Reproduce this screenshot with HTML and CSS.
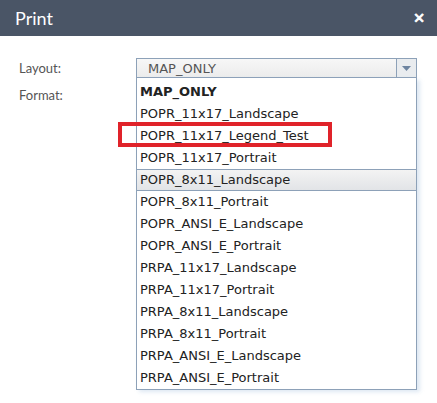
FILE: index.html
```html
<!DOCTYPE html>
<html>
<head>
<meta charset="utf-8">
<link rel="stylesheet" href="styles.css">
</head>
<body>
<div class="dialog">
  <div class="titlebar">
    <span class="title">Print</span>
    <span class="close">&#x2715;</span>
  </div>
  <div class="content">
    <div class="row">
      <span class="label">Layout:</span>
      <div class="select-wrap">
        <div class="select">
          <span class="value">MAP_ONLY</span>
          <span class="arrow"><svg width="9" height="5" viewBox="0 0 9 5"><path d="M0 0h9L4.5 5z" fill="#6d84a0"/></svg></span>
        </div>
        <ul class="menu">
          <li class="bold">MAP_ONLY</li>
          <li>POPR_11x17_Landscape</li>
          <li>POPR_11x17_Legend_Test</li>
          <li>POPR_11x17_Portrait</li>
          <li class="hover">POPR_8x11_Landscape</li>
          <li>POPR_8x11_Portrait</li>
          <li>POPR_ANSI_E_Landscape</li>
          <li>POPR_ANSI_E_Portrait</li>
          <li>PRPA_11x17_Landscape</li>
          <li>PRPA_11x17_Portrait</li>
          <li>PRPA_8x11_Landscape</li>
          <li>PRPA_8x11_Portrait</li>
          <li>PRPA_ANSI_E_Landscape</li>
          <li>PRPA_ANSI_E_Portrait</li>
        </ul>
        <div class="highlight"></div>
      </div>
    </div>
    <div class="row">
      <span class="label">Format:</span>
      <div class="field"></div>
    </div>
  </div>
</div>
</body>
</html>
```

FILE: styles.css
```css
html, body {
  margin: 0;
  padding: 0;
  background: #fff;
}
.dialog {
  width: 437px;
  height: 403px;
  overflow: hidden;
  font-family: Lato, "Open Sans", sans-serif;
}
.titlebar {
  height: 36px;
  background: #4a5566;
  display: flex;
  align-items: center;
  justify-content: space-between;
  padding: 0 12px 0 15px;
  color: #fff;
}
.title {
  font-size: 18px;
  font-family: Lato, sans-serif;
}
.close {
  font-size: 14px;
  font-weight: bold;
  font-family: "DejaVu Sans", sans-serif;
  -webkit-text-stroke: 0.8px #fff;
}
.content {
  padding: 22px 20px 0 19px;
  display: flex;
  flex-direction: column;
  gap: 7px;
}
.row {
  display: grid;
  grid-template-columns: 117px 281px;
  align-items: center;
  height: 20px;
}
.label {
  font-size: 13px;
  color: #555;
  font-family: Lato, sans-serif;
}
.select-wrap {
  position: relative;
  height: 20px;
}
.select {
  height: 18px;
  border: 1px solid #8da1b8;
  background: linear-gradient(#f7f7f7, #ececec);
  display: flex;
  align-items: center;
  font-family: "DejaVu Sans", Verdana, sans-serif;
  font-size: 13px;
  color: #555;
}
.value {
  flex: 1;
  padding-left: 11px;
}
.arrow {
  width: 19px;
  height: 18px;
  border-left: 1px solid #8da1b8;
  display: flex;
  align-items: center;
  justify-content: center;
  background: #e9ecef;
}
.menu {
  position: absolute;
  top: 20px;
  left: 0;
  width: 279px;
  margin: 0;
  padding: 3px 0 0 0;
  list-style: none;
  background: #fff;
  border: 1px solid #8da1b8;
  border-top: none;
  box-shadow: 3px 2px 4px rgba(160, 190, 220, 0.35);
  font-family: "DejaVu Sans", Verdana, sans-serif;
  font-size: 13px;
  color: #222;
}
.menu li {
  height: 22px;
  line-height: 22px;
  padding-left: 3px;
  white-space: nowrap;
}
.menu li.bold {
  font-weight: bold;
}
.menu li.hover {
  background: linear-gradient(#f3f3f3, #e2e4e7);
  border-top: 1px solid #8da1b8;
  border-bottom: 1px solid #8da1b8;
  height: 20px;
  line-height: 20px;
}
.highlight {
  position: absolute;
  left: -18px;
  top: 64px;
  width: 206px;
  height: 17px;
  border: 4px solid #e0232a;
}
.field {
  height: 20px;
}
```
